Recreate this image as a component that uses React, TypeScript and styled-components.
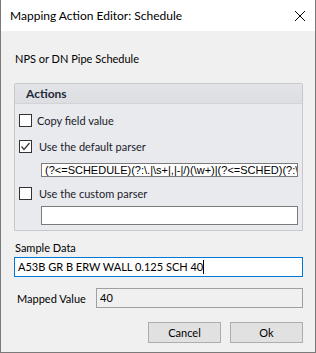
import React from "react";
import styled, { createGlobalStyle } from "styled-components";

const Global = createGlobalStyle`
  html, body { margin: 0; padding: 0; background: #f0f0f0; }
  * { box-sizing: border-box; }
`;

const Window = styled.div`
  width: 316px;
  height: 353px;
  border: 1px solid #7a7a7a;
  border-top: none;
  background: #f0f0f0;
  display: flex;
  flex-direction: column;
  font-family: Lato, "Liberation Sans", sans-serif;
  font-size: 11px;
  color: #000;
  overflow: hidden;
`;

const TitleBar = styled.div`
  height: 31px;
  background: #fff;
  display: flex;
  align-items: center;
  justify-content: space-between;
  padding: 0 10px 0 9px;
  flex: none;
`;

const Title = styled.span`
  font-family: Lato, "Noto Sans", sans-serif;
  font-size: 12px;
  color: #000;
`;

const CloseIcon = styled.svg`
  width: 10px;
  height: 10px;
`;

const Body = styled.div`
  flex: 1;
  display: flex;
  flex-direction: column;
  padding: 0 12px 0 13px;
`;

const Description = styled.div`
  margin-top: 20px;
  height: 15px;
  line-height: 15px;
  padding-left: 1px;
`;

const Group = styled.div`
  margin-top: 17px;
  height: 148px;
  border: 1px solid #c6c8cd;
  border-radius: 2px 2px 0 0;
  background: #e9eaee;
  display: flex;
  flex-direction: column;
`;

const GroupHeader = styled.div`
  height: 20px;
  background: linear-gradient(#e3e4e8, #dcdee2);
  border-bottom: 1px solid #d2d4d8;
  font-weight: bold;
  font-size: 12px;
  color: #1e2a3a;
  padding-left: 11px;
  line-height: 20px;
  flex: none;
`;

const GroupContent = styled.div`
  display: flex;
  flex-direction: column;
  padding: 10px 4px 0 4px;
`;

const CheckRow = styled.label<{ $gap?: number }>`
  display: flex;
  align-items: center;
  height: 13px;
  gap: ${(p) => p.$gap ?? 5}px;
  color: #1a1a2a;
`;

const Box = styled.span`
  width: 13px;
  height: 13px;
  border: 1px solid #333;
  background: #fff;
  display: inline-flex;
  align-items: center;
  justify-content: center;
  flex: none;
`;

const Spacer = styled.div<{ $h: number }>`
  height: ${(p) => p.$h}px;
  flex: none;
`;

const RegexInput = styled.div<{ $h: number }>`
  margin-left: 22px;
  width: 257px;
  height: ${(p) => p.$h}px;
  border: 1px solid #7a7a7a;
  background: #fff;
  white-space: nowrap;
  overflow: hidden;
  padding-left: 3px;
  line-height: ${(p) => p.$h - 2}px;
  font-family: "Liberation Sans", Arial, sans-serif;
  font-size: 11px;
`;

const Label = styled.div<{ $pl: number }>`
  height: 15px;
  line-height: 15px;
  padding-left: ${(p) => p.$pl}px;
`;

const SampleInput = styled.div`
  height: 20px;
  width: 289px;
  border: 1px solid #0078d7;
  background: #fff;
  line-height: 18px;
  padding-left: 3px;
  white-space: nowrap;
`;

const Caret = styled.span`
  display: inline-block;
  width: 1px;
  height: 14px;
  background: #000;
  vertical-align: -3px;
`;

const MappedRow = styled.div`
  display: flex;
  align-items: center;
  margin-top: 11px;
  height: 20px;
`;

const MappedInput = styled.div`
  margin-left: auto;
  width: 207px;
  height: 20px;
  border: 1px solid #a0a0a0;
  background: #f0f0f0;
  line-height: 18px;
  padding-left: 3px;
`;

const ButtonRow = styled.div`
  display: flex;
  justify-content: flex-end;
  gap: 9px;
  margin-top: 14px;
`;

const Button = styled.div`
  width: 73px;
  height: 21px;
  border: 1px solid #adadad;
  background: #e1e1e1;
  display: flex;
  align-items: center;
  justify-content: center;
`;

const Check = () => (
  <svg width="11" height="11" viewBox="0 0 11 11">
    <path d="M1.5 5.5 L4 8.5 L9.5 2" fill="none" stroke="#333" strokeWidth="1.2" />
  </svg>
);

export default function App() {
  return (
    <>
      <Global />
      <Window>
        <TitleBar>
          <Title>Mapping Action Editor: Schedule</Title>
          <CloseIcon viewBox="0 0 10 10">
            <path d="M0 0 L10 10 M10 0 L0 10" stroke="#000" strokeWidth="1" />
          </CloseIcon>
        </TitleBar>
        <Body>
          <Description>NPS or DN Pipe Schedule</Description>
          <Group>
            <GroupHeader>Actions</GroupHeader>
            <GroupContent>
              <CheckRow>
                <Box />
                <span>Copy field value</span>
              </CheckRow>
              <Spacer $h={13} />
              <CheckRow $gap={7}>
                <Box>
                  <Check />
                </Box>
                <span>Use the default parser</span>
              </CheckRow>
              <Spacer $h={10} />
              <RegexInput $h={14}>
                {"(?<=SCHEDULE)(?:\\.|\\s+|,|-|/)(\\w+)|(?<=SCHED)(?:\\.|\\s+|,|-|/)(\\w+)"}
              </RegexInput>
              <Spacer $h={10} />
              <CheckRow $gap={7}>
                <Box />
                <span>Use the custom parser</span>
              </CheckRow>
              <Spacer $h={6} />
              <RegexInput $h={19}></RegexInput>
            </GroupContent>
          </Group>
          <Spacer $h={9} />
          <Label $pl={1}>Sample Data</Label>
          <Spacer $h={2} />
          <SampleInput>
            A53B GR B ERW WALL 0.125 SCH 40
            <Caret />
          </SampleInput>
          <MappedRow>
            <Label $pl={3}>Mapped Value</Label>
            <MappedInput>40</MappedInput>
          </MappedRow>
          <ButtonRow>
            <Button>Cancel</Button>
            <Button>Ok</Button>
          </ButtonRow>
        </Body>
      </Window>
    </>
  );
}
